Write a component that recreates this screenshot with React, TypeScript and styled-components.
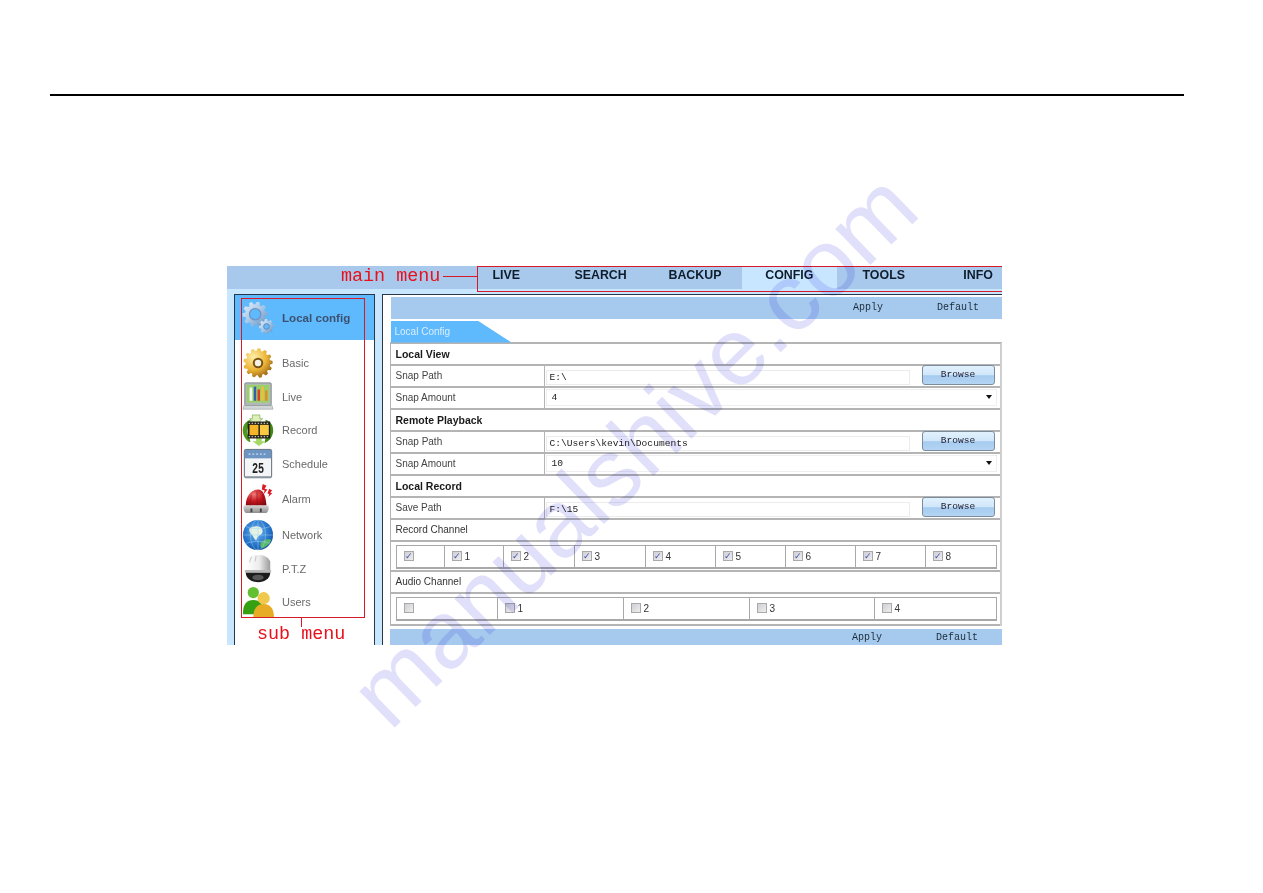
import React from "react";
import styled, { createGlobalStyle } from "styled-components";

const Global = createGlobalStyle`
  html, body { margin: 0; padding: 0; background: #fff; }
  body { font-family: "Liberation Sans", Arial, sans-serif; }
`;

const Page = styled.div`
  position: relative;
  width: 1263px;
  height: 893px;
  overflow: hidden;
  background: #fff;
  padding-top: 94px;
  box-sizing: border-box;
`;
const Rule = styled.div`
  width: 1134px;
  height: 2px;
  margin-left: 50px;
  background: #000;
`;
const Shot = styled.div`
  position: relative;
  width: 775px;
  height: 379px;
  margin: 170px 0 0 227px;
  overflow: hidden;
  display: flex;
  flex-direction: column;
  background: #c9e6ff;
  filter: blur(0.35px);
`;
const TopBar = styled.div`
  height: 23px;
  flex: none;
  background: #a8c8ec;
  padding-left: 232px;
`;
const Tabs = styled.div`
  display: grid;
  grid-template-columns: repeat(6, 94.4px);
  width: 566px;
  height: 23px;
`;
const Tab = styled.div<{ $active?: boolean }>`
  display: flex;
  align-items: flex-start;
  justify-content: center;
  padding-top: 2px;
  box-sizing: border-box;
  font-size: 12.4px;
  line-height: 14px;
  font-weight: 700;
  color: #0e1c2c;
  background: ${(p) => (p.$active ? "#c8e6ff" : "transparent")};
`;
const Body = styled.div`
  flex: 1;
  display: flex;
  gap: 7px;
  padding: 5px 0 0 7px;
  min-height: 0;
`;
const Sidebar = styled.aside`
  width: 141px;
  flex: none;
  box-sizing: border-box;
  background: #fff;
  border: 1.5px solid #26384a;
  border-bottom: 0;
`;
const SideHead = styled.div`
  height: 45px;
  background: #5fb9fd;
  display: flex;
  align-items: center;
  gap: 8px;
  padding-left: 7px;
  margin-bottom: 6px;
  font-size: 11.6px;
  font-weight: 700;
  color: #3c5170;
`;
const SideItem = styled.div<{ $h: number }>`
  height: ${(p) => p.$h}px;
  display: flex;
  align-items: center;
  gap: 8px;
  padding-left: 7px;
  font-size: 11px;
  color: #6a6a6a;
`;
const Icon = styled.svg`
  width: 32px;
  height: 32px;
  flex: none;
`;
const Main = styled.main`
  flex: 1;
  min-width: 0;
  box-sizing: border-box;
  background: #fff;
  border-left: 1.5px solid #26384a;
  border-top: 1.5px solid #26384a;
  padding: 1.5px 0 0 7.5px;
`;
const ActionBar = styled.div<{ $bottom?: boolean }>`
  height: ${(p) => (p.$bottom ? 17 : 22)}px;
  margin: ${(p) => (p.$bottom ? "3px 0 0 -1px" : "0")};
  background: #a6c9ee;
  display: flex;
  justify-content: flex-end;
  align-items: center;
  gap: 54px;
  padding-right: ${(p) => (p.$bottom ? 24 : 23)}px;
  font-family: "Liberation Mono", monospace;
  font-size: 10px;
  color: #1c2c3a;
`;
const ConfTab = styled.div`
  width: 121px;
  height: 22px;
  margin-top: 2px;
  background: #5fb9fd;
  clip-path: polygon(0 0, 87px 0, 121px 22px, 0 22px);
  box-sizing: border-box;
  padding: 5px 0 0 4px;
  font-size: 10px;
  line-height: 12px;
  color: #d9eeff;
`;
const Table = styled.div`
  margin: -1px 0 0 -1px;
  width: 612px;
  box-sizing: border-box;
  border-left: 1px solid #b4b4b4;
  border-right: 2px solid #cfcfcf;
  border-top: 2px solid #b4b4b4;
`;
const Row = styled.div<{ $h?: number }>`
  height: ${(p) => p.$h ?? 22}px;
  box-sizing: border-box;
  border-bottom: 2px solid #b4b4b4;
`;
const TitleRow = styled(Row)<{ $bold?: boolean }>`
  display: flex;
  align-items: center;
  padding-left: 5px;
  font-size: ${(p) => (p.$bold ? 10.5 : 10)}px;
  font-weight: ${(p) => (p.$bold ? 700 : 400)};
  color: ${(p) => (p.$bold ? "#1a1a1a" : "#333")};
`;
const FieldRow = styled(Row)`
  display: grid;
  grid-template-columns: 154px 1fr;
`;
const Label = styled.div`
  display: flex;
  align-items: center;
  padding-left: 5px;
  font-size: 10px;
  color: #444;
  border-right: 1px solid #b4b4b4;
`;
const Control = styled.div`
  position: relative;
  padding-left: 1px;
`;
const PathInput = styled.div`
  width: 364px;
  height: 15px;
  margin-top: 4px;
  box-sizing: border-box;
  border: 1px solid #ececec;
  padding-left: 3px;
  font-family: "Liberation Mono", monospace;
  font-size: 9.6px;
  line-height: 14px;
  color: #222;
`;
const BrowseButton = styled.div`
  position: absolute;
  left: 377px;
  top: -1px;
  width: 73px;
  height: 20px;
  box-sizing: border-box;
  border: 1px solid #7c8c9c;
  border-radius: 3px;
  background: linear-gradient(#e2f1fd 0%, #cfe6fa 52%, #a6cbef 53%, #b4d5f4 100%);
  display: flex;
  align-items: center;
  justify-content: center;
  font-family: "Liberation Mono", monospace;
  font-size: 9.6px;
  color: #223;
`;
const Select = styled.div`
  width: 451px;
  height: 17px;
  margin-top: 1px;
  box-sizing: border-box;
  border: 1px solid #efefef;
  padding-left: 5px;
  display: flex;
  justify-content: space-between;
  align-items: center;
  font-family: "Liberation Mono", monospace;
  font-size: 9.6px;
  color: #222;
`;
const Arrow = styled.span`
  width: 0;
  height: 0;
  margin-right: 4px;
  border-left: 3px solid transparent;
  border-right: 3px solid transparent;
  border-top: 4px solid #111;
`;
const GridRow = styled(Row)`
  padding: 3px 3px 0 5px;
`;
const ChannelBox = styled.div<{ $cols: string }>`
  display: grid;
  grid-template-columns: ${(p) => p.$cols};
  width: 601px;
  height: 24px;
  box-sizing: border-box;
  border: 1px solid #a8a8a8;
  border-bottom-width: 2px;
`;
const Channel = styled.div`
  display: flex;
  align-items: center;
  gap: 3px;
  padding-left: 7px;
  font-size: 10px;
  color: #333;
  border-left: 1px solid #a8a8a8;
  &:first-child { border-left: 0; }
`;
const Check = styled.span`
  width: 10px;
  height: 10px;
  box-sizing: border-box;
  border: 1px solid #a9a9a9;
  background: linear-gradient(135deg, #cfcfd4, #eeeeef);
  display: flex;
  align-items: center;
  justify-content: center;
  color: #3f4fb0;
  font-size: 9px;
  line-height: 9px;
`;
const Note = styled.div`
  position: absolute;
  font-family: "Liberation Mono", monospace;
  font-size: 18.4px;
  line-height: 18px;
  color: #e8101a;
  white-space: nowrap;
`;
const MainNote = styled(Note)`
  left: 114px;
  top: 2px;
`;
const SubNote = styled(Note)`
  left: 30px;
  top: 360px;
`;
const RedBox = styled.div`
  position: absolute;
  box-sizing: border-box;
  border: 1px solid #d81a28;
`;
const MainBox = styled(RedBox)`
  left: 250px;
  top: 0;
  width: 530px;
  height: 26px;
`;
const SubBox = styled(RedBox)`
  left: 14px;
  top: 32px;
  width: 124px;
  height: 320px;
`;
const MainLead = styled.div`
  position: absolute;
  left: 216px;
  top: 10px;
  width: 35px;
  height: 1px;
  background: #d81a28;
`;
const SubLead = styled.div`
  position: absolute;
  left: 74px;
  top: 351px;
  width: 1px;
  height: 10px;
  background: #d81a28;
`;
const Watermark = styled.div`
  position: absolute;
  left: 390px;
  top: 649px;
  transform-origin: 0 83px;
  transform: rotate(-44.2deg);
  font-family: "Liberation Sans", Arial, sans-serif;
  font-size: 95.5px;
  line-height: 100px;
  color: #e0e0fb;
  white-space: nowrap;
  pointer-events: none;
  mix-blend-mode: multiply;
`;

const gear = (cx: number, cy: number, r: number, R: number, n: number) => {
  const pts: string[] = [];
  for (let i = 0; i < n; i++) {
    const a = (i / n) * Math.PI * 2;
    const s = (Math.PI * 2) / n;
    [
      [r, -0.5],
      [R, -0.28],
      [R, 0.08],
      [r, 0.28],
    ].forEach(([rad, f]) => {
      const t = a + f * s;
      pts.push(`${(cx + rad * Math.cos(t)).toFixed(2)},${(cy + rad * Math.sin(t)).toFixed(2)}`);
    });
  }
  return `M${pts.join("L")}Z`;
};

const BlueGears = () => (
  <Icon viewBox="0 0 34 34">
    <defs>
      <linearGradient id="bg1" x1="0" y1="0" x2="1" y2="1">
        <stop offset="0" stopColor="#e6f2fb" />
        <stop offset="0.5" stopColor="#a9c8e6" />
        <stop offset="1" stopColor="#5f8abd" />
      </linearGradient>
    </defs>
    <path d={gear(14, 13, 10.5, 13.5, 10)} fill="url(#bg1)" />
    <circle cx="14" cy="13" r="6" fill="#5fb9fd" stroke="#6f95c2" strokeWidth="1.4" />
    <path d={gear(26, 26, 6, 8, 8)} fill="url(#bg1)" />
    <circle cx="26" cy="26" r="3" fill="#5fb9fd" stroke="#5f86b6" />
  </Icon>
);
const GoldGear = () => (
  <Icon viewBox="0 0 34 34">
    <defs>
      <radialGradient id="gg1" cx="0.35" cy="0.3" r="0.8">
        <stop offset="0" stopColor="#fff0a8" />
        <stop offset="0.55" stopColor="#ecb436" />
        <stop offset="1" stopColor="#8a5a12" />
      </radialGradient>
    </defs>
    <path d={gear(17, 17, 13, 15.6, 13)} fill="url(#gg1)" />
    <circle cx="17" cy="17" r="5.6" fill="#7a5414" />
    <circle cx="17" cy="17" r="3.4" fill="#f5f2e6" />
  </Icon>
);
const Monitor = () => (
  <Icon viewBox="0 0 34 34">
    <rect x="3" y="2" width="28" height="24" rx="1" fill="#b4babc" stroke="#7c8488" />
    <rect x="5" y="4" width="24" height="19" fill="#9ccf6c" />
    <rect x="8" y="7" width="3" height="14" fill="#f4f6f0" />
    <rect x="12.5" y="6" width="2.6" height="15" fill="#2f62a8" />
    <rect x="16.5" y="9" width="2.6" height="12" fill="#e03a26" />
    <rect x="20.5" y="6" width="2.6" height="15" fill="#f0c030" />
    <rect x="24.5" y="10" width="2.6" height="11" fill="#e88a20" />
    <path d="M2 26h30l1 4H1z" fill="#d0d5d6" stroke="#858d90" strokeWidth="0.5" />
  </Icon>
);
const RecordIcon = () => (
  <Icon viewBox="0 0 34 34">
    <path d="M9 6C3 8 0 13 1 20c1 5 4 9 8 10l-1-5c-3-3-4-9 1-14z" fill="#4a9a1c" />
    <path d="M25 6c6 2 9 7 8 14-1 5-4 9-9 11l1-6c4-3 4-9 0-14z" fill="#3f8a18" />
    <path d="M11 1h8v4h3l-7 6-7-6h3z" fill="#dcefb8" stroke="#6a9a38" strokeWidth="0.6" />
    <path d="M18 34l-7-5h4v-4h6v4h4z" fill="#a6d868" />
    <rect x="6" y="8" width="24" height="18" fill="#1c1c14" />
    <rect x="8" y="11.5" width="9.5" height="11" fill="#f4b526" />
    <rect x="19" y="11.5" width="9.5" height="11" fill="#f9c943" />
    <path d="M7 9.8h22M7 24.2h22" stroke="#efeadb" strokeWidth="1.2" strokeDasharray="1.6 1.6" />
  </Icon>
);
const Calendar = () => (
  <Icon viewBox="0 0 34 34">
    <rect x="2.5" y="1.5" width="29" height="30" rx="1.5" fill="#f3f5f6" stroke="#58626c" />
    <rect x="3" y="2" width="28" height="9" fill="#6d95c4" />
    <path d="M7 6.5h20" stroke="#c8dbef" strokeWidth="1.2" strokeDasharray="2 2" />
    <text x="17" y="26.5" textAnchor="middle" fontFamily="Liberation Mono, monospace" fontWeight="700" fontSize="16" textLength="13" lengthAdjust="spacingAndGlyphs" fill="#222">25</text>
    <path d="M3 31h28" stroke="#8a949c" strokeWidth="2" />
  </Icon>
);
const Alarm = () => (
  <Icon viewBox="0 0 34 34">
    <defs>
      <radialGradient id="al1" cx="0.4" cy="0.3" r="0.8">
        <stop offset="0" stopColor="#ef7a78" />
        <stop offset="0.55" stopColor="#c4141c" />
        <stop offset="1" stopColor="#7a0a10" />
      </radialGradient>
      <linearGradient id="al2" x1="0" y1="0" x2="0" y2="1">
        <stop offset="0" stopColor="#d4d4d4" />
        <stop offset="1" stopColor="#8c8c8c" />
      </linearGradient>
    </defs>
    <path d="M4 24C4 14 10 7 17 7c5 0 8 5 9 17z" fill="url(#al1)" />
    <path d="M10 13c-1 4-1 7-1 11M16 9v15M22 12c1 4 1 8 1 12" stroke="#8c1218" strokeWidth="0.7" fill="none" />
    <path d="M2 24h26c1 3 0 6-2 8H4c-2-2-3-5-2-8z" fill="url(#al2)" />
    <path d="M9 27h2v4H9zM19 27h2v4h-2z" fill="#444" />
    <path d="M22 1l4 2-2 3 3 1-4 5 1-4-3-1zM29 6l3 2-2 2 2 1-4 4 1-3-2-1z" fill="#e01820" />
  </Icon>
);
const Globe = () => (
  <Icon viewBox="0 0 34 34">
    <defs>
      <radialGradient id="gl1" cx="0.45" cy="0.4" r="0.65">
        <stop offset="0" stopColor="#6fb6ec" />
        <stop offset="0.7" stopColor="#2270c8" />
        <stop offset="1" stopColor="#14509a" />
      </radialGradient>
    </defs>
    <circle cx="17" cy="17" r="16" fill="url(#gl1)" />
    <path d="M8 10c4-3 9-3 12-1 3 3 2 7-1 8-2 1-3 3-4 6-2-2-3-4-4-6-2-1-4-4-3-7z" fill="#e4f2e4" />
    <path d="M20 25c3-3 7-4 11-3-1 4-5 8-10 9-2-2-2-4-1-6z" fill="#58b868" />
    <path d="M1 17h32M17 1v32M4 8c8 3 18 3 26 0M4 26c8-3 18-3 26 0" stroke="#a6d4f6" strokeWidth="0.5" fill="none" />
    <ellipse cx="17" cy="17" rx="8" ry="16" stroke="#a6d4f6" strokeWidth="0.5" fill="none" />
  </Icon>
);
const Dome = () => (
  <Icon viewBox="0 0 34 34">
    <defs>
      <linearGradient id="dm1" x1="0" y1="0" x2="1" y2="0">
        <stop offset="0" stopColor="#ffffff" />
        <stop offset="0.55" stopColor="#ececec" />
        <stop offset="1" stopColor="#9c9c9c" />
      </linearGradient>
    </defs>
    <path d="M4 19V9C6 4 11 2 17 2s11 2 13 7v10z" fill="url(#dm1)" />
    <path d="M10 4l-2 6M15 3l-1 6" stroke="#c4c4c4" strokeWidth="1" />
    <rect x="3" y="18" width="28" height="3" rx="1" fill="#b8b8b8" />
    <path d="M4 21h26c0 6-6 10-13 10S4 27 4 21z" fill="#1c1c1c" />
    <ellipse cx="17" cy="26" rx="6" ry="3" fill="#565656" />
  </Icon>
);
const Users = () => (
  <Icon viewBox="0 0 34 34">
    <circle cx="12" cy="7" r="6" fill="#62c030" />
    <path d="M1 30c0-11 4-15 11-15s11 4 11 15z" fill="#35a012" />
    <circle cx="23" cy="13" r="6.5" fill="#f0c84c" />
    <path d="M12 33c0-9 4-14 11-14s11 5 11 14z" fill="#e8ac24" />
  </Icon>
);

const items: [string, React.FC, number][] = [
  ["Basic", GoldGear, 34],
  ["Live", Monitor, 33],
  ["Record", RecordIcon, 34],
  ["Schedule", Calendar, 34],
  ["Alarm", Alarm, 35],
  ["Network", Globe, 37],
  ["P.T.Z", Dome, 32],
  ["Users", Users, 33],
];
const recordCols = "47px 59px 71px 71px 70px 70px 70px 70px 1fr";
const audioCols = "100px 126px 126px 125px 1fr";
const recordCh = ["", "1", "2", "3", "4", "5", "6", "7", "8"];
const audioCh = ["", "1", "2", "3", "4"];

const Path = ({ label, value }: { label: string; value: string }) => (
  <FieldRow>
    <Label>{label}</Label>
    <Control>
      <PathInput>{value}</PathInput>
      <BrowseButton>Browse</BrowseButton>
    </Control>
  </FieldRow>
);
const Amount = ({ value }: { value: string }) => (
  <FieldRow>
    <Label>Snap Amount</Label>
    <Control>
      <Select>
        {value}
        <Arrow />
      </Select>
    </Control>
  </FieldRow>
);

export default function App() {
  return (
    <Page>
      <Global />
      <Rule />
      <Shot>
        <TopBar>
          <Tabs>
            {["LIVE", "SEARCH", "BACKUP", "CONFIG", "TOOLS", "INFO"].map((t) => (
              <Tab key={t} $active={t === "CONFIG"}>{t}</Tab>
            ))}
          </Tabs>
        </TopBar>
        <Body>
          <Sidebar>
            <SideHead>
              <BlueGears />
              Local config
            </SideHead>
            {items.map(([name, Ico, h]) => (
              <SideItem key={name} $h={h}>
                <Ico />
                {name}
              </SideItem>
            ))}
          </Sidebar>
          <Main>
            <ActionBar>
              <span>Apply</span>
              <span>Default</span>
            </ActionBar>
            <ConfTab>Local Config</ConfTab>
            <Table>
              <TitleRow $bold>Local View</TitleRow>
              <Path label="Snap Path" value="E:\" />
              <Amount value="4" />
              <TitleRow $bold>Remote Playback</TitleRow>
              <Path label="Snap Path" value="C:\Users\kevin\Documents" />
              <Amount value="10" />
              <TitleRow $bold>Local Record</TitleRow>
              <Path label="Save Path" value="F:\15" />
              <TitleRow>Record Channel</TitleRow>
              <GridRow $h={30}>
                <ChannelBox $cols={recordCols}>
                  {recordCh.map((c, i) => (
                    <Channel key={i}>
                      <Check>✓</Check>
                      {c}
                    </Channel>
                  ))}
                </ChannelBox>
              </GridRow>
              <TitleRow>Audio Channel</TitleRow>
              <GridRow $h={32}>
                <ChannelBox $cols={audioCols}>
                  {audioCh.map((c, i) => (
                    <Channel key={i}>
                      <Check />
                      {c}
                    </Channel>
                  ))}
                </ChannelBox>
              </GridRow>
            </Table>
            <ActionBar $bottom>
              <span>Apply</span>
              <span>Default</span>
            </ActionBar>
          </Main>
        </Body>
        <MainNote>main menu</MainNote>
        <MainLead />
        <MainBox />
        <SubBox />
        <SubLead />
        <SubNote>sub menu</SubNote>
      </Shot>
      <Watermark>manualshive.com</Watermark>
    </Page>
  );
}
